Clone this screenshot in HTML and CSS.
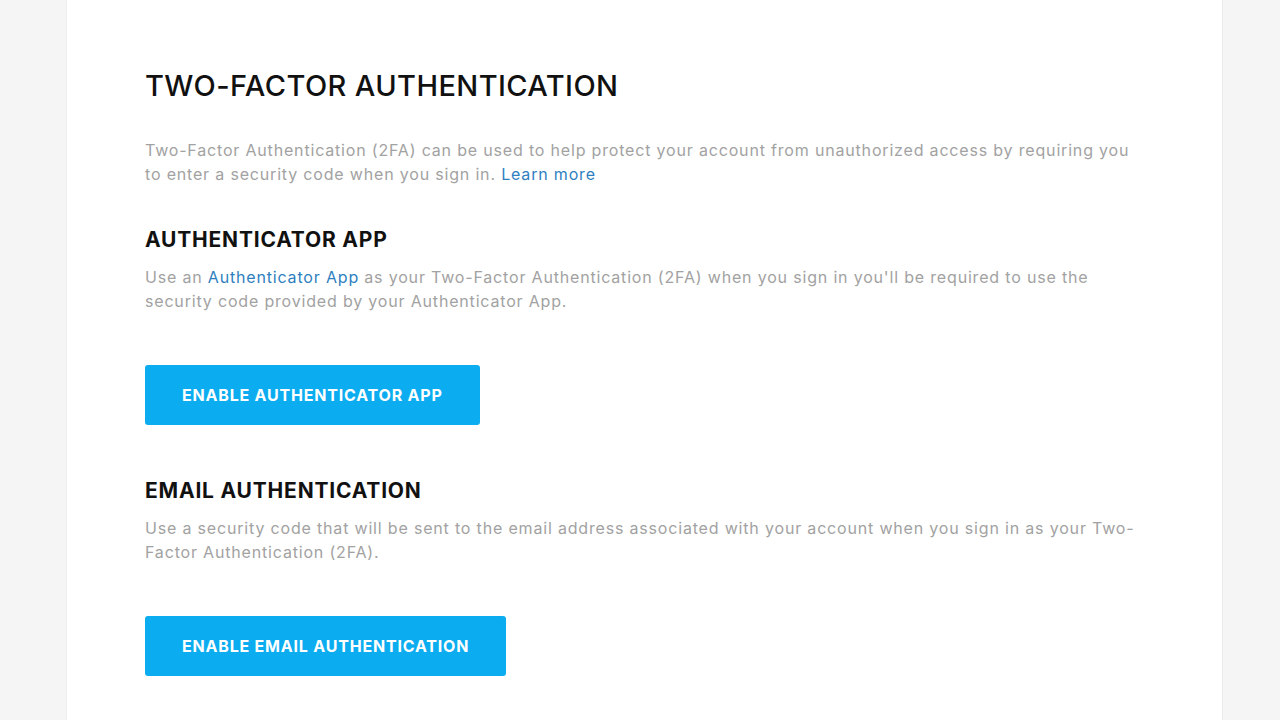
FILE: index.html
```html
<!DOCTYPE html>
<html lang="en">
<head>
<meta charset="utf-8">
<title>Two-Factor Authentication</title>
<link rel="stylesheet" href="styles.css">
</head>
<body>
<div class="page">
  <main class="panel">
    <h1 class="title">TWO-FACTOR AUTHENTICATION</h1>
    <p class="intro">Two-Factor Authentication (2FA) can be used to help protect your account from unauthorized access by requiring you to enter a security code when you sign in. <a class="link" href="#">Learn more</a></p>

    <section class="method">
      <h2 class="method-title">AUTHENTICATOR APP</h2>
      <p class="desc">Use an <a class="link" href="#">Authenticator App</a> as your Two-Factor Authentication (2FA) when you sign in you'll be required to use the security code provided by your Authenticator App.</p>
      <button class="btn" type="button">ENABLE AUTHENTICATOR APP</button>
    </section>

    <section class="method">
      <h2 class="method-title">EMAIL AUTHENTICATION</h2>
      <p class="desc">Use a security code that will be sent to the email address associated with your account when you sign in as your Two-Factor Authentication (2FA).</p>
      <button class="btn" type="button">ENABLE EMAIL AUTHENTICATION</button>
    </section>
  </main>
</div>
</body>
</html>
```

FILE: styles.css
```css
html, body {
  margin: 0;
  padding: 0;
  height: 100%;
}
body {
  background: #f5f5f5;
  font-family: Inter, "Noto Sans", "Liberation Sans", sans-serif;
  overflow: hidden;
}
.page {
  display: flex;
  padding-left: 66px;
  min-height: 720px;
}
.panel {
  width: 1157px;
  background: #ffffff;
  box-sizing: border-box;
  padding: 66px 80px 40px 78px;
  border-right: 1px solid #ececec;
  border-left: 1px solid #efefef;
}
.title {
  margin: 0;
  font-size: 29px;
  font-weight: 500;
  letter-spacing: 0.4px;
  color: #111;
  line-height: 40px;
}
.intro {
  margin: 32px 0 0;
  font-size: 16px;
  line-height: 24px;
  letter-spacing: 0.82px;
  color: #a2a2a2;
  max-width: 992px;
}
.link {
  color: #2f7fbf;
  text-decoration: none;
}
.method {
  margin-top: 40px;
}
.method + .method {
  margin-top: 52px;
}
.method-title {
  margin: 0;
  font-size: 21px;
  font-weight: 700;
  color: #111;
  letter-spacing: 0.8px;
  line-height: 28px;
}
.desc {
  margin: 11px 0 0;
  font-size: 16px;
  line-height: 24px;
  letter-spacing: 0.82px;
  color: #a2a2a2;
  max-width: 992px;
}
.btn {
  display: block;
  margin-top: 52px;
  height: 60px;
  padding: 0 37px;
  border: 0;
  border-radius: 3px;
  background: #0cadf0;
  color: #ffffff;
  font-family: inherit;
  font-size: 16px;
  font-weight: 700;
  letter-spacing: 0.8px;
}
```
